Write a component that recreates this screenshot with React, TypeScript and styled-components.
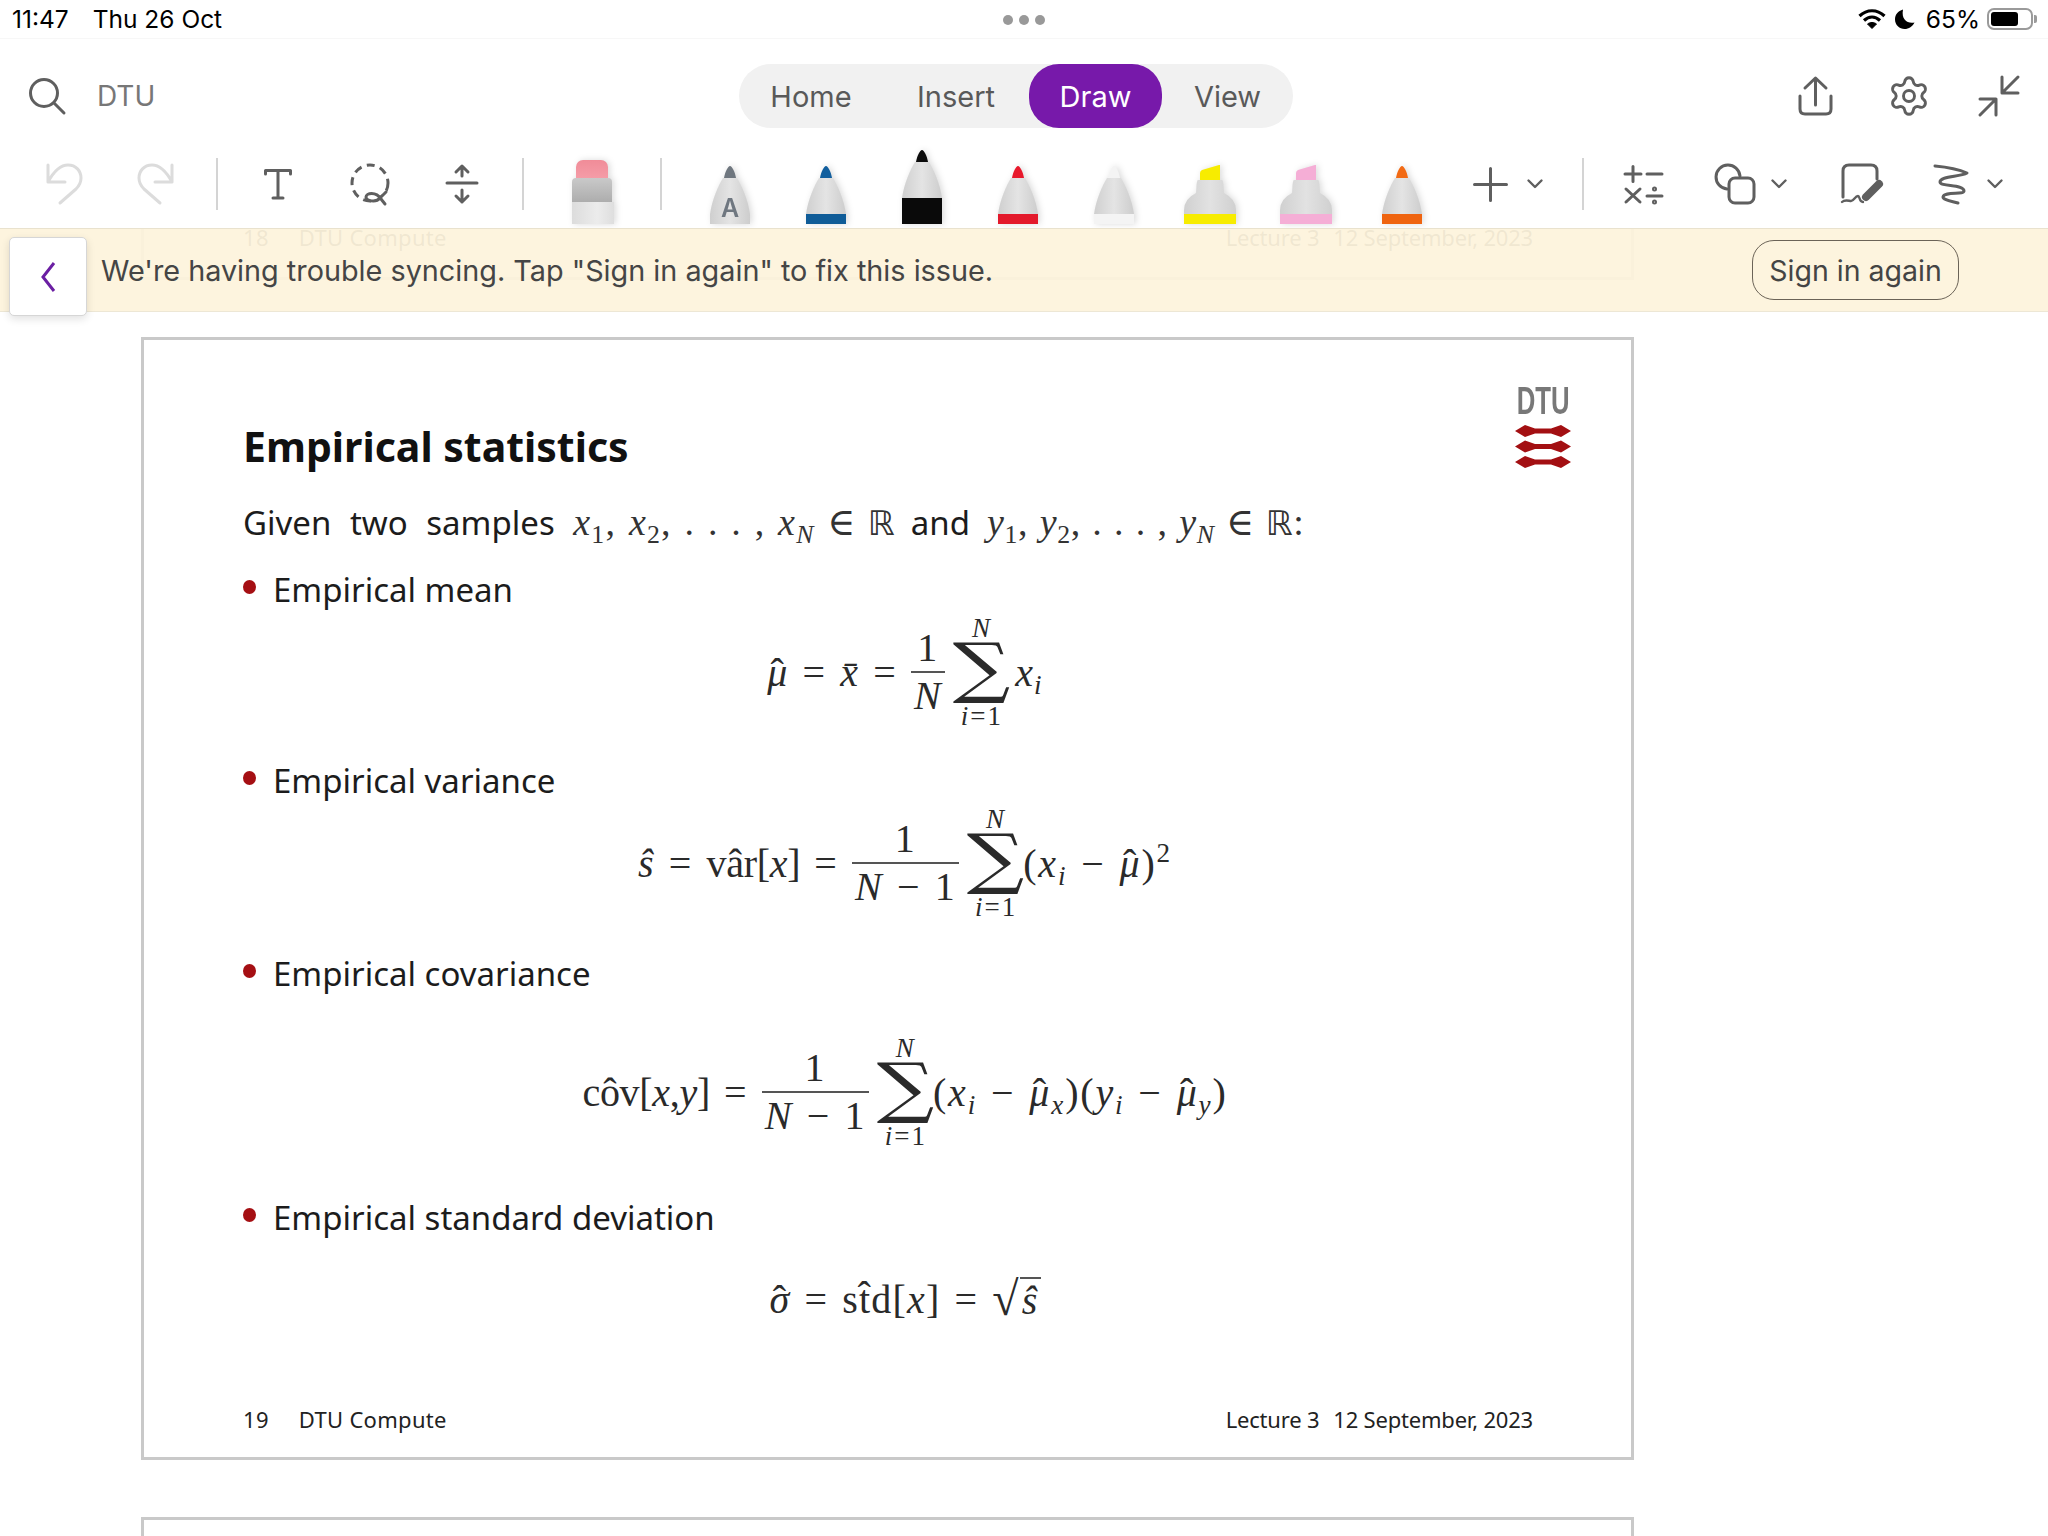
import React from 'react';
import styled, { createGlobalStyle } from 'styled-components';
import { Settings } from 'lucide-react';

const GlobalStyle = createGlobalStyle`
  html, body {
    margin: 0;
    padding: 0;
    background: #fff;
    font-family: Inter, "Noto Sans", sans-serif;
  }
`;

const PENS = [
  { id: 'text', tip: '#6f777f', band: null, left: 48, letter: true },
  { id: 'blue', tip: '#125f9e', band: '#0f5c98', left: 56 },
  { id: 'black', tip: '#0c0c0c', band: '#0a0a0a', left: 56, selected: true },
  { id: 'red', tip: '#e8192c', band: '#e3192b', left: 56 },
  { id: 'white', tip: '#f4f4f4', band: '#f4f4f4', left: 56 },
];

const Ic = ({ w, h, children, color = '#5f5f5f', flip = false }: any) => (
  <IconSvg
    width={w}
    height={h}
    viewBox={`0 0 ${w} ${h}`}
    fill="none"
    stroke={color}
    strokeWidth="3"
    strokeLinecap="round"
    strokeLinejoin="round"
    $flip={flip}
  >
    {children}
  </IconSvg>
);

const Chevron = ({ left }: { left: number }) => (
  <Tool $left={left}>
    <Ic w={16} h={10}>
      <path d="M1.5 1.5 L8 8 L14.5 1.5" strokeWidth="2.4" />
    </Ic>
  </Tool>
);

const Pen = ({ id, tip, band, selected, letter, left }: any) => (
  <PenSvg width="40" height="74" viewBox="0 0 40 74" $left={left}>
    <defs>
      <linearGradient id={`body-${id}`} x1="0" x2="1" y1="0" y2="0">
        <stop offset="0" stopColor="#cfcfcf" />
        <stop offset="0.5" stopColor="#e4e4e4" />
        <stop offset="1" stopColor="#cdcdcd" />
      </linearGradient>
    </defs>
    <g transform={selected ? 'translate(0 -16)' : undefined}>
      <path d="M14 28 C15 22 18 16 20 16 C22 16 25 22 26 28 Z" fill={tip} />
      <path
        d="M13 28 H27 C32 36 38 50 40 64 V90 H0 V64 C2 50 8 36 13 28 Z"
        fill={`url(#body-${id})`}
      />
      {band && <rect x="0" y="64" width="40" height="26" fill={band} />}
      {letter && (
        <PenLetter x="20" y="67" textAnchor="middle">
          A
        </PenLetter>
      )}
    </g>
  </PenSvg>
);

const Highlighter = ({ id, color, left }: any) => (
  <PenSvg width="52" height="59" viewBox="0 0 52 59" $left={left}>
    <defs>
      <linearGradient id={`hl-${id}`} x1="0" x2="1" y1="0" y2="0">
        <stop offset="0" stopColor="#d0d0d0" />
        <stop offset="0.5" stopColor="#e2e2e2" />
        <stop offset="1" stopColor="#d0d0d0" />
      </linearGradient>
    </defs>
    <path d="M16 15 V8 Q16 6 18 5 L35 0 H36 V15 Z" fill={color} />
    <path
      d="M14 15 H38 Q39 15 39.5 20 L40 28 Q52 34 52 45 V59 H0 V45 Q0 34 12 28 L12.5 20 Q13 15 14 15 Z"
      fill={`url(#hl-${id})`}
    />
    <rect x="0" y="49" width="52" height="10" fill={color} />
  </PenSvg>
);

const Eraser = () => (
  <PenSvg width="42" height="64" viewBox="0 0 42 64" $left={48}>
    <defs>
      <linearGradient id="eraser-top" x1="0" x2="0" y1="0" y2="1">
        <stop offset="0" stopColor="#f08c98" />
        <stop offset="1" stopColor="#f7a3ae" />
      </linearGradient>
      <linearGradient id="eraser-mid" x1="0" x2="0" y1="0" y2="1">
        <stop offset="0" stopColor="#c9c9c9" />
        <stop offset="1" stopColor="#adadad" />
      </linearGradient>
      <linearGradient id="eraser-low" x1="0" x2="1" y1="0" y2="0">
        <stop offset="0" stopColor="#dcdcdc" />
        <stop offset="0.6" stopColor="#ececec" />
        <stop offset="1" stopColor="#dedede" />
      </linearGradient>
    </defs>
    <rect x="4" y="0" width="32" height="26" rx="7" fill="url(#eraser-top)" />
    <path d="M0 22 Q0 18 4 18 H36 Q40 18 40 22 V42 H0 Z" fill="url(#eraser-mid)" />
    <rect x="0" y="42" width="42" height="22" fill="url(#eraser-low)" />
  </PenSvg>
);

const SlideFooter = ({ page }: { page: number }) => (
  <Footer>
    <FooterLeft>
      <span>{page}</span>
      <span>DTU Compute</span>
    </FooterLeft>
    <FooterRight>
      <span>Lecture 3</span>
      <span>12 September, 2023</span>
    </FooterRight>
  </Footer>
);

const SumOf = ({ after = -2 }: { after?: number }) => (
  <Sum $after={after}>
    <SumLimit>
      <i>N</i>
    </SumLimit>
    <SumSign>∑</SumSign>
    <SumLimit>
      <i>i</i>=1
    </SumLimit>
  </Sum>
);

const Fraction = ({ bottom }: { bottom: React.ReactNode }) => (
  <Frac>
    <FracTop>1</FracTop>
    <FracBottom>{bottom}</FracBottom>
  </Frac>
);

const NMinusOne = () => (
  <>
    <i>N</i>
    <Minus>−</Minus>1
  </>
);

const Logo = () => (
  <LogoBox>
    <LogoText>DTU</LogoText>
    <svg width="58" height="44" viewBox="0 0 58 44" fill="#a30f12">
      {[0, 15.5, 31].map((y) => (
        <path
          key={y}
          transform={`translate(0 ${y})`}
          d="M1 6 L11 0 L21 3.5 H37 L47 0 L57 6 L47 12 L37 8.5 H21 L11 12 Z"
        />
      ))}
    </svg>
  </LogoBox>
);

export default function App() {
  return (
    <Page>
      <GlobalStyle />
      <StatusBar>
        <StatusLeft>
          <span>11:47</span>
          <span>Thu 26 Oct</span>
        </StatusLeft>
        <Dots>
          <Dot />
          <Dot />
          <Dot />
        </Dots>
        <StatusRight>
          <svg width="28" height="20" viewBox="0 0 28 20" fill="none" stroke="#000" strokeWidth="3.2">
            <path d="M1.5 7 C9 0 19 0 26.5 7" />
            <path d="M6 11.5 C11 7 17 7 22 11.5" />
            <path d="M14 19.5 L9.5 15 C12 13 16 13 18.5 15 Z" fill="#000" strokeWidth="1" />
          </svg>
          <svg width="20" height="20" viewBox="0 0 20 20" fill="#000">
            <path d="M8 0.5 C3 2 0 5.5 0 10.5 C0 16 4.5 20 9.5 20 C14 20 17.5 17.5 19.5 13.5 C13 15 6 11 8 0.5 Z" />
          </svg>
          <Battery>
            <span>65%</span>
            <BatteryShell>
              <BatteryFill />
            </BatteryShell>
            <BatteryCap />
          </Battery>
        </StatusRight>
      </StatusBar>

      <HeaderRow>
        <SearchArea>
          <Ic w={36} h={36}>
            <circle cx="15" cy="15" r="13.5" />
            <path d="M25 25 L35 35" />
          </Ic>
          <SearchText>DTU</SearchText>
        </SearchArea>
        <Tabs>
          <Tab $width={144}>Home</Tab>
          <Tab $width={146}>Insert</Tab>
          <Tab $width={133} $active>
            Draw
          </Tab>
          <Tab $width={131}>View</Tab>
        </Tabs>
        <HeaderActions>
          <Ic w={35} h={40}>
            <path d="M17.5 2 V29 M7 12 L17.5 2 L28 12 M2 20 V33 Q2 38 7 38 H28 Q33 38 33 33 V20" />
          </Ic>
          <Settings size={44} color="#5f5f5f" strokeWidth={1.6} />
          <CollapseIcon>
            <Ic w={40} h={40}>
              <path d="M39 1 L23 17 M23 1 V17 H39 M1 39 L17 23 M1 23 H17 V39" />
            </Ic>
          </CollapseIcon>
        </HeaderActions>
      </HeaderRow>

      <Toolbar>
        <Tool $left={46}>
          <Ic w={38} h={42} color="#dcdcdc">
            <path d="M2 2 V19 H19 M2 19 C8 8 14 2 22 2 C30 2 35 8 35 15 C35 20 33 23 30 26 L14 40" />
          </Ic>
        </Tool>
        <Tool $left={52}>
          <Ic w={38} h={42} color="#dcdcdc" flip>
            <path d="M2 2 V19 H19 M2 19 C8 8 14 2 22 2 C30 2 35 8 35 15 C35 20 33 23 30 26 L14 40" />
          </Ic>
        </Tool>
        <Separator $left={42} />
        <Tool $left={46}>
          <Ic w={28} h={32}>
            <path d="M1.5 6 V2.5 H26.5 V6 M14 2.5 V30 M9 30 H19" />
          </Ic>
        </Tool>
        <Tool $left={58}>
          <Ic w={40} h={42}>
            <circle cx="20" cy="20" r="18" strokeDasharray="8 5.5" strokeLinecap="butt" />
            <path d="M36 29 L30 35 C26 40 16 38 16 34 C16 30 26 28 31 36 L35 41" fill="#fff" />
          </Ic>
        </Tool>
        <Tool $left={56}>
          <Ic w={32} h={42}>
            <path d="M1 20 H31 M16 3 V13 M10 9 L16 3 L22 9 M16 27 V39 M10 33 L16 39 L22 33" />
          </Ic>
        </Tool>
        <Separator $left={44} />
        <Eraser />
        <Separator $left={46} />
        {PENS.map((pen) => (
          <Pen key={pen.id} {...pen} />
        ))}
        <Highlighter id="yellow" color="#f7ec00" left={50} />
        <Highlighter id="pink" color="#f5aed6" left={44} />
        <Pen id="orange" tip="#f26a14" band="#ef6410" left={50} />
        <Tool $left={51}>
          <Ic w={35} h={35}>
            <path d="M1.5 17.5 H33.5 M17.5 1.5 V33.5" />
          </Ic>
        </Tool>
        <Chevron left={19} />
        <Separator $left={39} />
        <Tool $left={39}>
          <Ic w={40} h={38}>
            <path d="M2 9 H18 M10 1.5 V16.5 M24 9 H39 M3 24 L17 37 M17 24 L3 37 M24 31 H39" />
            <circle cx="31.5" cy="24" r="1" />
            <circle cx="31.5" cy="37" r="1" />
          </Ic>
        </Tool>
        <Tool $left={52}>
          <Ic w={40} h={40}>
            <path d="M25 12 A12 12 0 1 0 12 25" />
            <rect x="14" y="14" width="25" height="25" rx="6" />
          </Ic>
        </Tool>
        <Chevron left={16} />
        <Tool $left={54}>
          <Ic w={42} h={42}>
            <path d="M2 34 V8 Q2 2 8 2 H30 Q36 2 36 8 V16" />
            <path d="M38 21 L25 34" strokeWidth="8" />
            <path d="M1 39 C4 36 8 38 10 38 C13 38 14 33 17 33 C19 33 18 39 22 39" strokeWidth="2.4" />
          </Ic>
        </Tool>
        <Tool $left={51}>
          <Ic w={38} h={40}>
            <path d="M1 2 C12 3 24 5 33 9 C26 13 6 12 6 18 C6 23 30 20 30 27 C30 31 10 27 9 33 C9 36 17 37 24 39" />
          </Ic>
        </Tool>
        <Chevron left={15} />
      </Toolbar>

      <Doc>
        <Slide $clipped>
          <SlideFooter page={18} />
        </Slide>

        <Slide>
          <SlideHead>
            <Title>Empirical statistics</Title>
            <Logo />
          </SlideHead>

          <Intro>
            Given two samples{' '}
            <InlineMath>
              <i>x</i>
              <Sub>1</Sub>, <i>x</i>
              <Sub>2</Sub>, . . . , <i>x</i>
              <Sub>
                <i>N</i>
              </Sub>{' '}
              ∈<Real>ℝ</Real>
            </InlineMath>
            <And>and</And>
            <InlineMath $tight>
              <i>y</i>
              <Sub>1</Sub>, <i>y</i>
              <Sub>2</Sub>, . . . , <i>y</i>
              <Sub>
                <i>N</i>
              </Sub>{' '}
              ∈<Real>ℝ</Real>:
            </InlineMath>
          </Intro>

          <Bullet $top={21}>Empirical mean</Bullet>
          <Equation $height={118}>
            <Run>
              <Hat>
                <i>μ</i>
              </Hat>
            </Run>
            <Rel>=</Rel>
            <Run>
              <i>x̄</i>
            </Run>
            <Rel>=</Rel>
            <Fraction bottom={<i>N</i>} />
            <SumOf after={4} />
            <Run>
              <i>x</i>
              <Sub>
                <i>i</i>
              </Sub>
            </Run>
          </Equation>

          <Bullet $top={27}>Empirical variance</Bullet>
          <Equation $height={118}>
            <Run>
              <i>ŝ</i>
            </Run>
            <Rel>=</Rel>
            <Run $tight>
              vâr[<i>x</i>]
            </Run>
            <Rel>=</Rel>
            <Fraction bottom={<NMinusOne />} />
            <SumOf />
            <Run $wide>
              (<i>x</i>
              <Sub>
                <i>i</i>
              </Sub>
              <Minus>−</Minus>
              <Hat>
                <i>μ</i>
              </Hat>
              )<Sup>2</Sup>
            </Run>
          </Equation>

          <Bullet $top={29}>Empirical covariance</Bullet>
          <Equation $height={118} $top={36}>
            <Run $tight>
              côv[<i>x</i>,<i>y</i>]
            </Run>
            <Rel>=</Rel>
            <Fraction bottom={<NMinusOne />} />
            <SumOf />
            <Run $wide>
              (<i>x</i>
              <Sub>
                <i>i</i>
              </Sub>
              <Minus>−</Minus>
              <Hat>
                <i>μ</i>
              </Hat>
              <Sub>
                <i>x</i>
              </Sub>
              )(<i>y</i>
              <Sub>
                <i>i</i>
              </Sub>
              <Minus>−</Minus>
              <Hat>
                <i>μ</i>
              </Hat>
              <Sub>
                <i>y</i>
              </Sub>
              )
            </Run>
          </Equation>

          <Bullet $top={44}>Empirical standard deviation</Bullet>
          <Equation $height={80} $top={18}>
            <Run>
              <Hat>
                <i>σ</i>
              </Hat>
            </Run>
            <Rel>=</Rel>
            <Run>
              st̂d[<i>x</i>]
            </Run>
            <Rel>=</Rel>
            <Radical>√</Radical>
            <Radicand>
              <i>ŝ</i>
            </Radicand>
          </Equation>

          <SlideFooter page={19} />
        </Slide>

        <Slide />
      </Doc>

      <Banner>
        <BackButton>
          <svg width="16" height="32" viewBox="0 0 16 32" fill="none" stroke="#6b1fa3" strokeWidth="3">
            <path d="M14 2 L3 16 L14 30" />
          </svg>
        </BackButton>
        <BannerText>We're having trouble syncing. Tap "Sign in again" to fix this issue.</BannerText>
        <SignIn>Sign in again</SignIn>
      </Banner>
    </Page>
  );
}

const Page = styled.div`
  position: relative;
  width: 2048px;
  height: 1536px;
  overflow: hidden;
  background: #fff;
`;

const StatusBar = styled.div`
  position: relative;
  display: flex;
  align-items: center;
  justify-content: space-between;
  height: 38px;
  padding: 0 11px 0 12px;
  border-bottom: 1px solid #f7f7f7;
  font-size: 24.5px;
  color: #000;
`;

const StatusLeft = styled.div`
  display: flex;
  gap: 24px;
`;

const Dots = styled.div`
  position: absolute;
  left: 1003px;
  top: 15px;
  display: flex;
  gap: 6px;
`;

const Dot = styled.span`
  width: 10px;
  height: 10px;
  border-radius: 50%;
  background: #999;
`;

const StatusRight = styled.div`
  display: flex;
  align-items: center;
  gap: 9px;
`;

const Battery = styled.div`
  display: flex;
  align-items: center;
  margin-left: 2px;
  span {
    margin-right: 7px;
  }
`;

const BatteryShell = styled.div`
  width: 46px;
  height: 22px;
  padding: 2px;
  box-sizing: border-box;
  border: 2px solid #9a9a9a;
  border-radius: 7px;
`;

const BatteryFill = styled.div`
  width: 27px;
  height: 14px;
  background: #000;
  border-radius: 3px;
`;

const BatteryCap = styled.div`
  width: 3px;
  height: 8px;
  margin-left: 1px;
  background: #9a9a9a;
  border-radius: 0 2px 2px 0;
`;

const IconSvg = styled.svg<{ $flip: boolean }>`
  display: block;
  overflow: visible;
  transform: ${({ $flip }) => ($flip ? 'scaleX(-1)' : 'none')};
`;

const HeaderRow = styled.div`
  display: flex;
  align-items: center;
  height: 111px;
  padding-top: 3px;
  box-sizing: border-box;
`;

const SearchArea = styled.div`
  display: flex;
  align-items: center;
  width: 739px;
  padding-left: 29px;
  box-sizing: border-box;
`;

const SearchText = styled.span`
  margin-left: 32px;
  font-size: 28px;
  color: #777;
`;

const Tabs = styled.div`
  display: flex;
  width: 554px;
  height: 64px;
  border-radius: 32px;
  background: #f1f1f1;
`;

const Tab = styled.div<{ $active?: boolean; $width: number }>`
  display: flex;
  align-items: center;
  justify-content: center;
  height: 64px;
  width: ${({ $width }) => $width}px;
  border-radius: 30px;
  font-size: 29px;
  color: ${({ $active }) => ($active ? '#fff' : '#595959')};
  background: ${({ $active }) => ($active ? '#7719aa' : 'transparent')};
`;

const HeaderActions = styled.div`
  display: flex;
  align-items: center;
  gap: 54px;
  margin-left: 505px;
`;

const CollapseIcon = styled.div`
  margin-left: -6px;
`;

const Toolbar = styled.div`
  display: flex;
  align-items: flex-start;
  height: 78px;
  padding-bottom: 4px;
  box-sizing: border-box;
`;

const Tool = styled.div<{ $left: number }>`
  display: flex;
  align-items: center;
  height: 68px;
  flex-shrink: 0;
  margin-left: ${({ $left }) => $left}px;
`;

const Separator = styled.div<{ $left: number }>`
  width: 2px;
  height: 52px;
  margin-top: 8px;
  flex-shrink: 0;
  margin-left: ${({ $left }) => $left}px;
  background: #d4d4d4;
`;

const PenSvg = styled.svg<{ $left: number }>`
  display: block;
  align-self: flex-end;
  flex-shrink: 0;
  margin-left: ${({ $left }) => $left}px;
  filter: drop-shadow(2px 0 3px rgba(0, 0, 0, 0.14));
`;

const PenLetter = styled.text`
  font-family: Inter, sans-serif;
  font-size: 25px;
  font-weight: 600;
  fill: #6f7780;
`;

const Doc = styled.div`
  display: flex;
  flex-direction: column;
  gap: 57px;
  padding-left: 141px;
`;

const Slide = styled.div<{ $clipped?: boolean }>`
  display: flex;
  flex-direction: column;
  justify-content: flex-end;
  flex-shrink: 0;
  width: 1493px;
  height: ${({ $clipped }) => ($clipped ? '52px' : '1123px')};
  padding: 0 94px ${({ $clipped }) => ($clipped ? '25px' : '23px')} 99px;
  box-sizing: border-box;
  border: 3px solid #c9c9c9;
  border-top-width: ${({ $clipped }) => ($clipped ? '0' : '3px')};
  background: #fff;
  font-family: "Noto Sans", "Open Sans", sans-serif;
  color: #1c1c1c;
`;

const SlideHead = styled.div`
  display: flex;
  justify-content: space-between;
  align-items: flex-end;
  height: 88px;
  margin-top: 41px;
`;

const Title = styled.h1`
  margin: 0;
  font-size: 41px;
  line-height: 46px;
  font-weight: 700;
  color: #111;
`;

const LogoBox = styled.div`
  display: flex;
  flex-direction: column;
  align-items: center;
  width: 58px;
  margin-right: -35px;
`;

const LogoText = styled.div`
  height: 44px;
  font-family: "Liberation Sans", sans-serif;
  font-size: 39px;
  line-height: 40px;
  font-weight: 700;
  color: #787878;
  transform: scaleX(0.66);
`;

const Intro = styled.p`
  margin: 30px 0 0;
  font-size: 33px;
  line-height: 46px;
  word-spacing: 10px;
  white-space: nowrap;
`;

const And = styled.span`
  margin: 0 17px 0 15px;
`;

const InlineMath = styled.span<{ $tight?: boolean }>`
  font-family: "Liberation Serif", "DejaVu Serif", serif;
  font-size: 38px;
  letter-spacing: ${({ $tight }) => ($tight ? '0.6px' : '1.2px')};
  word-spacing: ${({ $tight }) => ($tight ? '1.5px' : '2px')};
  color: #333;
`;

const Real = styled.span`
  margin-left: 11px;
  font-family: "DejaVu Sans", sans-serif;
  font-size: 34px;
`;

const Sub = styled.sub`
  font-size: 68%;
  line-height: 0;
  vertical-align: -0.3em;
`;

const Sup = styled.sup`
  font-size: 68%;
  line-height: 0;
  vertical-align: 0.55em;
`;

const Bullet = styled.div<{ $top: number }>`
  display: flex;
  align-items: center;
  margin-top: ${({ $top }) => $top}px;
  font-size: 33px;
  line-height: 46px;
  &::before {
    content: '';
    width: 13px;
    height: 14px;
    margin: -6px 17px 0 0;
    border-radius: 50%;
    background: #a50f13;
  }
`;

const Equation = styled.div<{ $height: number; $top?: number }>`
  display: flex;
  align-items: center;
  justify-content: center;
  height: ${({ $height }) => $height}px;
  margin: ${({ $top }) => $top ?? 0}px 0 0 30px;
  font-family: "Liberation Serif", "DejaVu Serif", serif;
  font-size: 40px;
  letter-spacing: 1.2px;
  color: #2a2a2a;
  white-space: pre;
`;

const Run = styled.span<{ $tight?: boolean; $wide?: boolean }>`
  display: inline-block;
  white-space: pre;
  letter-spacing: ${({ $tight, $wide }) => ($tight ? '-0.3px' : $wide ? '1.8px' : 'inherit')};
`;

const Hat = styled.span`
  position: relative;
  display: inline-block;
  &::before {
    content: 'ˆ';
    position: absolute;
    left: 0;
    right: 0;
    top: 0;
    text-align: center;
    font-style: normal;
  }
`;

const Rel = styled.span`
  margin: 0 14px;
`;

const Minus = styled.span`
  margin: 0 14px;
`;

const Frac = styled.span`
  display: inline-flex;
  flex-direction: column;
  align-items: center;
  margin-right: 8px;
`;

const FracTop = styled.span`
  line-height: 46px;
  padding: 0 2px;
`;

const FracBottom = styled.span`
  line-height: 46px;
  padding: 0 3px;
  border-top: 2.5px solid #555;
`;

const Sum = styled.span<{ $after: number }>`
  display: inline-flex;
  flex-direction: column;
  align-items: center;
  margin-right: ${({ $after }) => $after}px;
`;

const SumSign = styled.span`
  padding: 0 5px;
  font-family: "DejaVu Serif", serif;
  font-size: 66px;
  line-height: 58px;
  transform: translateY(-4px) scaleX(1.22);
`;

const SumLimit = styled.span`
  font-size: 27px;
  line-height: 30px;
  letter-spacing: 2px;
`;

const Radical = styled.span`
  font-size: 48px;
  line-height: 48px;
`;

const Radicand = styled.span`
  padding: 0 2px;
  line-height: 44px;
  margin-top: 2px;
  border-top: 2px solid #555;
`;

const Footer = styled.div`
  display: flex;
  justify-content: space-between;
  margin-top: auto;
  font-size: 22px;
  line-height: 30px;
  color: #222;
`;

const FooterLeft = styled.div`
  display: flex;
  gap: 30px;
  letter-spacing: 0.3px;
`;

const FooterRight = styled.div`
  display: flex;
  gap: 14px;
  margin-right: 4px;
  letter-spacing: -0.2px;
`;

const Banner = styled.div`
  position: absolute;
  top: 228px;
  left: 0;
  right: 0;
  display: flex;
  align-items: center;
  justify-content: space-between;
  height: 84px;
  padding: 0 89px 0 101px;
  box-sizing: border-box;
  background: rgba(253, 243, 220, 0.94);
  border-top: 1px solid #e9e2ce;
  border-bottom: 1px solid #ede7d5;
`;

const BackButton = styled.div`
  position: absolute;
  left: 9px;
  top: 8px;
  display: flex;
  align-items: center;
  justify-content: center;
  width: 78px;
  height: 79px;
  box-sizing: border-box;
  border: 1px solid #d6d6d6;
  border-radius: 5px;
  background: #fff;
  box-shadow: 0 3px 8px rgba(0, 0, 0, 0.12);
`;

const BannerText = styled.span`
  font-size: 28.8px;
  color: #454545;
`;

const SignIn = styled.div`
  display: flex;
  align-items: center;
  justify-content: center;
  width: 207px;
  height: 60px;
  box-sizing: border-box;
  border: 1.5px solid #6b6357;
  border-radius: 22px;
  font-size: 28.5px;
  color: #444;
`;
